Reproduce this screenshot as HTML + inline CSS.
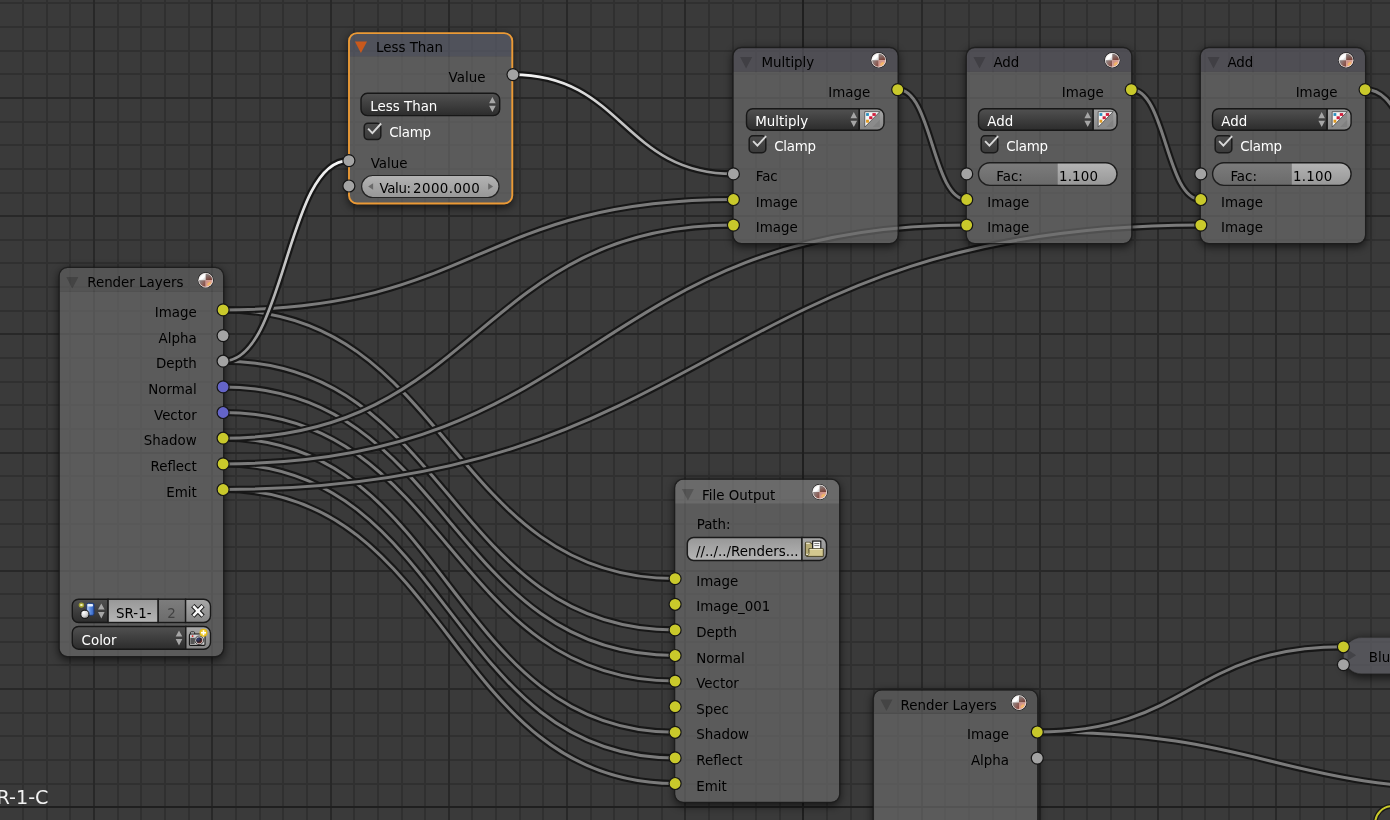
<!DOCTYPE html>
<html lang="en"><head><meta charset="utf-8"><title>Node Editor</title>
<style>html,body{margin:0;padding:0;background:#3a3a3a;}body{width:1390px;height:820px;overflow:hidden;position:relative}svg{display:block;position:absolute;left:0;top:0}text{font-family:"DejaVu Sans","Liberation Sans",sans-serif;}</style>
</head><body>
<svg width="1390" height="820" viewBox="0 0 1390 820">
<defs>
<filter id="noop" x="0" y="0" width="1" height="1" filterUnits="objectBoundingBox"><feOffset dx="0" dy="0"/></filter>
<filter id="sh" x="-20%" y="-20%" width="140%" height="140%"><feGaussianBlur stdDeviation="4.5"/></filter>
<linearGradient id="ddg" x1="0" y1="0" x2="0" y2="1"><stop offset="0" stop-color="#515151"/><stop offset="1" stop-color="#2c2c2c"/></linearGradient>
<linearGradient id="btng" x1="0" y1="0" x2="0" y2="1"><stop offset="0" stop-color="#a9a9a9"/><stop offset="1" stop-color="#858585"/></linearGradient>
<linearGradient id="cbg" x1="0" y1="0" x2="0" y2="1"><stop offset="0" stop-color="#4c4c4c"/><stop offset="1" stop-color="#3a3a3a"/></linearGradient>
<linearGradient id="numg" x1="0" y1="0" x2="0" y2="1"><stop offset="0" stop-color="#b4b4b4"/><stop offset="1" stop-color="#979797"/></linearGradient>
<linearGradient id="sldg" x1="0" y1="0" x2="0" y2="1"><stop offset="0" stop-color="#7c7c7c"/><stop offset="1" stop-color="#6a6a6a"/></linearGradient>
<linearGradient id="txtg" x1="0" y1="0" x2="0" y2="1"><stop offset="0" stop-color="#979797"/><stop offset="1" stop-color="#b6b6b6"/></linearGradient>
<linearGradient id="dimg" x1="0" y1="0" x2="0" y2="1"><stop offset="0" stop-color="#7d7d7d"/><stop offset="1" stop-color="#6c6c6c"/></linearGradient>
<radialGradient id="sphg" cx="0.38" cy="0.32" r="0.75"><stop offset="0" stop-color="#ffffff"/><stop offset="0.55" stop-color="#c9c4c2"/><stop offset="1" stop-color="#6d6260"/></radialGradient>
<linearGradient id="sphr" x1="0" y1="0" x2="1" y2="1"><stop offset="0" stop-color="#c98a80"/><stop offset="1" stop-color="#f0b4a4"/></linearGradient>
<linearGradient id="sphtr" x1="0" y1="0" x2="0.3" y2="1"><stop offset="0" stop-color="#8c8c8c"/><stop offset="1" stop-color="#7a453c"/></linearGradient>
<linearGradient id="sphbl" x1="0" y1="0" x2="1" y2="0.6"><stop offset="0" stop-color="#909090"/><stop offset="1" stop-color="#8a4d44"/></linearGradient>
<linearGradient id="sphw" x1="0" y1="0" x2="1" y2="1"><stop offset="0" stop-color="#d8d8d8"/><stop offset="0.5" stop-color="#ffffff"/><stop offset="1" stop-color="#c8c8c8"/></linearGradient>
<linearGradient id="cylg" x1="0" y1="0" x2="1" y2="0"><stop offset="0" stop-color="#cfe0fa"/><stop offset="0.45" stop-color="#5f8fe0"/><stop offset="1" stop-color="#2f5fc0"/></linearGradient>
<radialGradient id="lensg" cx="0.3" cy="0.3" r="0.9"><stop offset="0" stop-color="#33407a"/><stop offset="0.5" stop-color="#2a2430"/><stop offset="1" stop-color="#a03a28"/></radialGradient>
<radialGradient id="ballg" cx="0.35" cy="0.3" r="0.8"><stop offset="0" stop-color="#ffffff"/><stop offset="0.6" stop-color="#d0d0d0"/><stop offset="1" stop-color="#707070"/></radialGradient>
<linearGradient id="hl1" gradientUnits="userSpaceOnUse" x1="223" y1="361" x2="348" y2="161"><stop offset="0" stop-color="#878787"/><stop offset="0.5" stop-color="#c4c4c4"/><stop offset="1" stop-color="#fafafa"/></linearGradient>
<linearGradient id="hl2" gradientUnits="userSpaceOnUse" x1="513" y1="75" x2="733" y2="174"><stop offset="0" stop-color="#fafafa"/><stop offset="0.5" stop-color="#c4c4c4"/><stop offset="1" stop-color="#8c8c8c"/></linearGradient>
<mask id="shm" maskUnits="userSpaceOnUse" x="0" y="0" width="1390" height="820"><rect width="1390" height="820" fill="#fff"/>
<rect x="349.0" y="33.1" width="163.3" height="170.4" rx="8" fill="#000"/>
<rect x="733.4" y="48.0" width="164.3" height="195.0" rx="8" fill="#000"/>
<rect x="966.7" y="48.0" width="164.6" height="195.0" rx="8" fill="#000"/>
<rect x="1200.8" y="48.0" width="164.3" height="195.0" rx="8" fill="#000"/>
<rect x="59.6" y="268.0" width="163.5" height="388.2" rx="8" fill="#000"/>
<rect x="675.1" y="479.8" width="164.1" height="322.1" rx="8" fill="#000"/>
<rect x="873.7" y="690.4" width="163.6" height="169.6" rx="8" fill="#000"/>
<rect x="1343.6" y="637.6" width="116.4" height="36.2" rx="18" fill="#000"/>
</mask>
</defs>
<rect width="1390" height="820" fill="#3a3a3a"/>
<g shape-rendering="crispEdges"><rect x="22" y="0" width="2" height="820" fill="#303030"/>
<rect x="46" y="0" width="2" height="820" fill="#303030"/>
<rect x="69" y="0" width="2" height="820" fill="#303030"/>
<rect x="117" y="0" width="2" height="820" fill="#303030"/>
<rect x="140" y="0" width="2" height="820" fill="#303030"/>
<rect x="164" y="0" width="2" height="820" fill="#303030"/>
<rect x="188" y="0" width="2" height="820" fill="#303030"/>
<rect x="235" y="0" width="2" height="820" fill="#303030"/>
<rect x="259" y="0" width="2" height="820" fill="#303030"/>
<rect x="282" y="0" width="2" height="820" fill="#303030"/>
<rect x="306" y="0" width="2" height="820" fill="#303030"/>
<rect x="353" y="0" width="2" height="820" fill="#303030"/>
<rect x="377" y="0" width="2" height="820" fill="#303030"/>
<rect x="401" y="0" width="2" height="820" fill="#303030"/>
<rect x="424" y="0" width="2" height="820" fill="#303030"/>
<rect x="471" y="0" width="2" height="820" fill="#303030"/>
<rect x="495" y="0" width="2" height="820" fill="#303030"/>
<rect x="519" y="0" width="2" height="820" fill="#303030"/>
<rect x="542" y="0" width="2" height="820" fill="#303030"/>
<rect x="590" y="0" width="2" height="820" fill="#303030"/>
<rect x="613" y="0" width="2" height="820" fill="#303030"/>
<rect x="637" y="0" width="2" height="820" fill="#303030"/>
<rect x="661" y="0" width="2" height="820" fill="#303030"/>
<rect x="708" y="0" width="2" height="820" fill="#303030"/>
<rect x="732" y="0" width="2" height="820" fill="#303030"/>
<rect x="755" y="0" width="2" height="820" fill="#303030"/>
<rect x="779" y="0" width="2" height="820" fill="#303030"/>
<rect x="826" y="0" width="2" height="820" fill="#303030"/>
<rect x="850" y="0" width="2" height="820" fill="#303030"/>
<rect x="873" y="0" width="2" height="820" fill="#303030"/>
<rect x="897" y="0" width="2" height="820" fill="#303030"/>
<rect x="944" y="0" width="2" height="820" fill="#303030"/>
<rect x="968" y="0" width="2" height="820" fill="#303030"/>
<rect x="992" y="0" width="2" height="820" fill="#303030"/>
<rect x="1015" y="0" width="2" height="820" fill="#303030"/>
<rect x="1063" y="0" width="2" height="820" fill="#303030"/>
<rect x="1086" y="0" width="2" height="820" fill="#303030"/>
<rect x="1110" y="0" width="2" height="820" fill="#303030"/>
<rect x="1134" y="0" width="2" height="820" fill="#303030"/>
<rect x="1181" y="0" width="2" height="820" fill="#303030"/>
<rect x="1204" y="0" width="2" height="820" fill="#303030"/>
<rect x="1228" y="0" width="2" height="820" fill="#303030"/>
<rect x="1252" y="0" width="2" height="820" fill="#303030"/>
<rect x="1299" y="0" width="2" height="820" fill="#303030"/>
<rect x="1323" y="0" width="2" height="820" fill="#303030"/>
<rect x="1346" y="0" width="2" height="820" fill="#303030"/>
<rect x="1370" y="0" width="2" height="820" fill="#303030"/>
<rect x="0" y="2" width="1390" height="2" fill="#303030"/>
<rect x="0" y="26" width="1390" height="2" fill="#303030"/>
<rect x="0" y="50" width="1390" height="2" fill="#303030"/>
<rect x="0" y="73" width="1390" height="2" fill="#303030"/>
<rect x="0" y="121" width="1390" height="2" fill="#303030"/>
<rect x="0" y="144" width="1390" height="2" fill="#303030"/>
<rect x="0" y="168" width="1390" height="2" fill="#303030"/>
<rect x="0" y="192" width="1390" height="2" fill="#303030"/>
<rect x="0" y="239" width="1390" height="2" fill="#303030"/>
<rect x="0" y="262" width="1390" height="2" fill="#303030"/>
<rect x="0" y="286" width="1390" height="2" fill="#303030"/>
<rect x="0" y="310" width="1390" height="2" fill="#303030"/>
<rect x="0" y="357" width="1390" height="2" fill="#303030"/>
<rect x="0" y="381" width="1390" height="2" fill="#303030"/>
<rect x="0" y="404" width="1390" height="2" fill="#303030"/>
<rect x="0" y="428" width="1390" height="2" fill="#303030"/>
<rect x="0" y="475" width="1390" height="2" fill="#303030"/>
<rect x="0" y="499" width="1390" height="2" fill="#303030"/>
<rect x="0" y="523" width="1390" height="2" fill="#303030"/>
<rect x="0" y="546" width="1390" height="2" fill="#303030"/>
<rect x="0" y="593" width="1390" height="2" fill="#303030"/>
<rect x="0" y="617" width="1390" height="2" fill="#303030"/>
<rect x="0" y="641" width="1390" height="2" fill="#303030"/>
<rect x="0" y="664" width="1390" height="2" fill="#303030"/>
<rect x="0" y="712" width="1390" height="2" fill="#303030"/>
<rect x="0" y="735" width="1390" height="2" fill="#303030"/>
<rect x="0" y="759" width="1390" height="2" fill="#303030"/>
<rect x="0" y="783" width="1390" height="2" fill="#303030"/>
<rect x="93" y="0" width="2" height="820" fill="#282828"/>
<rect x="211" y="0" width="2" height="820" fill="#282828"/>
<rect x="330" y="0" width="2" height="820" fill="#282828"/>
<rect x="448" y="0" width="2" height="820" fill="#282828"/>
<rect x="566" y="0" width="2" height="820" fill="#282828"/>
<rect x="684" y="0" width="2" height="820" fill="#282828"/>
<rect x="921" y="0" width="2" height="820" fill="#282828"/>
<rect x="1039" y="0" width="2" height="820" fill="#282828"/>
<rect x="1157" y="0" width="2" height="820" fill="#282828"/>
<rect x="1275" y="0" width="2" height="820" fill="#282828"/>
<rect x="0" y="97" width="1390" height="2" fill="#282828"/>
<rect x="0" y="215" width="1390" height="2" fill="#282828"/>
<rect x="0" y="333" width="1390" height="2" fill="#282828"/>
<rect x="0" y="452" width="1390" height="2" fill="#282828"/>
<rect x="0" y="570" width="1390" height="2" fill="#282828"/>
<rect x="0" y="688" width="1390" height="2" fill="#282828"/>
<rect x="802" y="0" width="2" height="820" fill="#1f1f1f"/>
<rect x="0" y="806" width="1390" height="2" fill="#1f1f1f"/></g>
<g filter="url(#noop)"><text x="-15.7" y="803.7" fill="#f2f2f2" font-size="19.2" text-anchor="start" >SR-1-C</text></g>
<rect x="1375.2" y="806.2" width="80" height="60" rx="17" fill="none" stroke="#181818" stroke-width="4.6"/><rect x="1375.2" y="806.2" width="80" height="60" rx="17" fill="none" stroke="#c9c92b" stroke-width="2"/>
<g id="links">
<path d="M223.2 309.9 C449.1 309.9 449.1 578.6 675.1 578.6" fill="none" stroke="#171717" stroke-width="7.2"/><path d="M223.2 309.9 C449.1 309.9 449.1 578.6 675.1 578.6" fill="none" stroke="#7b7b7b" stroke-width="3.0"/>
<path d="M223.2 361.2 C449.1 361.2 449.1 629.9 675.1 629.9" fill="none" stroke="#171717" stroke-width="7.2"/><path d="M223.2 361.2 C449.1 361.2 449.1 629.9 675.1 629.9" fill="none" stroke="#7b7b7b" stroke-width="3.0"/>
<path d="M223.2 386.9 C449.1 386.9 449.1 655.5 675.1 655.5" fill="none" stroke="#171717" stroke-width="7.2"/><path d="M223.2 386.9 C449.1 386.9 449.1 655.5 675.1 655.5" fill="none" stroke="#7b7b7b" stroke-width="3.0"/>
<path d="M223.2 412.5 C449.1 412.5 449.1 681.1 675.1 681.1" fill="none" stroke="#171717" stroke-width="7.2"/><path d="M223.2 412.5 C449.1 412.5 449.1 681.1 675.1 681.1" fill="none" stroke="#7b7b7b" stroke-width="3.0"/>
<path d="M223.2 438.2 C449.1 438.2 449.1 732.3 675.1 732.3" fill="none" stroke="#171717" stroke-width="7.2"/><path d="M223.2 438.2 C449.1 438.2 449.1 732.3 675.1 732.3" fill="none" stroke="#7b7b7b" stroke-width="3.0"/>
<path d="M223.2 463.9 C449.1 463.9 449.1 757.9 675.1 757.9" fill="none" stroke="#171717" stroke-width="7.2"/><path d="M223.2 463.9 C449.1 463.9 449.1 757.9 675.1 757.9" fill="none" stroke="#7b7b7b" stroke-width="3.0"/>
<path d="M223.2 489.5 C449.1 489.5 449.1 783.5 675.1 783.5" fill="none" stroke="#171717" stroke-width="7.2"/><path d="M223.2 489.5 C449.1 489.5 449.1 783.5 675.1 783.5" fill="none" stroke="#7b7b7b" stroke-width="3.0"/>
<path d="M223.2 309.9 C478.3 309.9 478.3 199.5 733.4 199.5" fill="none" stroke="#171717" stroke-width="7.2"/><path d="M223.2 309.9 C478.3 309.9 478.3 199.5 733.4 199.5" fill="none" stroke="#7b7b7b" stroke-width="3.0"/>
<path d="M223.2 438.2 C478.3 438.2 478.3 225.1 733.4 225.1" fill="none" stroke="#171717" stroke-width="7.2"/><path d="M223.2 438.2 C478.3 438.2 478.3 225.1 733.4 225.1" fill="none" stroke="#7b7b7b" stroke-width="3.0"/>
<path d="M223.2 463.9 C595.0 463.9 595.0 225.1 966.7 225.1" fill="none" stroke="#171717" stroke-width="7.2"/><path d="M223.2 463.9 C595.0 463.9 595.0 225.1 966.7 225.1" fill="none" stroke="#7b7b7b" stroke-width="3.0"/>
<path d="M223.2 489.5 C712.0 489.5 712.0 225.1 1200.8 225.1" fill="none" stroke="#171717" stroke-width="7.2"/><path d="M223.2 489.5 C712.0 489.5 712.0 225.1 1200.8 225.1" fill="none" stroke="#7b7b7b" stroke-width="3.0"/>
<path d="M897.7 89.6 C932.2 89.6 932.2 199.5 966.7 199.5" fill="none" stroke="#171717" stroke-width="7.2"/><path d="M897.7 89.6 C932.2 89.6 932.2 199.5 966.7 199.5" fill="none" stroke="#7b7b7b" stroke-width="3.0"/>
<path d="M1131.0 89.6 C1165.9 89.6 1165.9 199.5 1200.8 199.5" fill="none" stroke="#171717" stroke-width="7.2"/><path d="M1131.0 89.6 C1165.9 89.6 1165.9 199.5 1200.8 199.5" fill="none" stroke="#7b7b7b" stroke-width="3.0"/>
<path d="M1365.1 89.6 C1400.0 89.6 1400.0 147.5 1435.0 147.5" fill="none" stroke="#171717" stroke-width="7.2"/><path d="M1365.1 89.6 C1400.0 89.6 1400.0 147.5 1435.0 147.5" fill="none" stroke="#7b7b7b" stroke-width="3.0"/>
<path d="M1037.3 732.0 C1270.2 732.0 1270.2 790.0 1503.0 790.0" fill="none" stroke="#171717" stroke-width="7.2"/><path d="M1037.3 732.0 C1270.2 732.0 1270.2 790.0 1503.0 790.0" fill="none" stroke="#7b7b7b" stroke-width="3.0"/>
<path d="M1037.3 732.0 C1190.3 732.0 1190.3 646.8 1343.4 646.8" fill="none" stroke="#171717" stroke-width="7.2"/><path d="M1037.3 732.0 C1190.3 732.0 1190.3 646.8 1343.4 646.8" fill="none" stroke="#7b7b7b" stroke-width="3.0"/>
<path d="M223.2 361.2 C285.8 361.2 285.8 160.6 348.4 160.6" fill="none" stroke="#171717" stroke-width="7.2"/><path d="M223.2 361.2 C285.8 361.2 285.8 160.6 348.4 160.6" fill="none" stroke="url(#hl1)" stroke-width="2.7"/>
<path d="M513.1 74.6 C623.2 74.6 623.2 173.9 733.4 173.9" fill="none" stroke="#171717" stroke-width="7.2"/><path d="M513.1 74.6 C623.2 74.6 623.2 173.9 733.4 173.9" fill="none" stroke="url(#hl2)" stroke-width="2.7"/>
</g>
<g mask="url(#shm)">
<rect x="348.0" y="34.1" width="165.3" height="173.4" rx="9" fill="#000" opacity="0.62" filter="url(#sh)"/>
<rect x="732.4" y="49.0" width="166.3" height="198.0" rx="9" fill="#000" opacity="0.62" filter="url(#sh)"/>
<rect x="965.7" y="49.0" width="166.6" height="198.0" rx="9" fill="#000" opacity="0.62" filter="url(#sh)"/>
<rect x="1199.8" y="49.0" width="166.3" height="198.0" rx="9" fill="#000" opacity="0.62" filter="url(#sh)"/>
<rect x="58.6" y="269.0" width="165.5" height="391.2" rx="9" fill="#000" opacity="0.62" filter="url(#sh)"/>
<rect x="674.1" y="480.8" width="166.1" height="325.1" rx="9" fill="#000" opacity="0.62" filter="url(#sh)"/>
<rect x="872.7" y="691.4" width="165.6" height="172.6" rx="9" fill="#000" opacity="0.62" filter="url(#sh)"/>
<rect x="1342.6" y="638.6" width="118.4" height="39.2" rx="19" fill="#000" opacity="0.62" filter="url(#sh)"/>
</g>
<g><path d="M349.0 56.3 H512.3 V195.5 A8 8 0 0 1 504.3 203.5 H357.0 A8 8 0 0 1 349.0 195.5 Z" fill="rgba(108,108,108,0.68)"/><path d="M349.0 56.3 V41.1 A8 8 0 0 1 357.0 33.1 H504.3 A8 8 0 0 1 512.3 41.1 V56.3 Z" fill="rgba(92,95,110,0.66)"/><rect x="349.0" y="33.1" width="163.3" height="170.4" rx="8" fill="none" stroke="#eb9a36" stroke-width="1.9"/><path d="M354.9 41.4 H367.0 L360.9 52.9 Z" fill="#c9591c"/><text x="376.0" y="52.0" fill="#000" font-size="13.4" text-anchor="start" >Less Than</text><text x="485.4" y="81.8" fill="#000" font-size="13.4" text-anchor="end" >Value</text><rect x="361.0" y="93.3" width="138.7" height="22.3" rx="6.3" fill="url(#ddg)" stroke="#171717" stroke-width="1.4"/><text x="370.3" y="111.0" fill="#fff" font-size="13.4" text-anchor="start" >Less Than</text><path d="M489.1 103.2 H495.7 L492.4 96.9 Z M489.1 105.7 H495.7 L492.4 112.0 Z" fill="#a6a6a6"/><rect x="364.2" y="123.2" width="16.6" height="16.4" rx="3.8" fill="url(#cbg)" stroke="#1a1a1a" stroke-width="1.5"/><path d="M368.1 128.6 L372.4 133.1 L381.1 123.5" fill="none" stroke="#d8d8d8" stroke-width="1.9" stroke-linejoin="miter"/><text x="389.2" y="137.2" fill="#fff" font-size="13.4" text-anchor="start" letter-spacing="-0.25">Clamp</text><text x="370.7" y="167.5" fill="#000" font-size="13.4" text-anchor="start" >Value</text><rect x="361.6" y="175.5" width="137.4" height="22.0" rx="11.0" fill="url(#numg)" stroke="#242424" stroke-width="1.2"/><path d="M373.1 183.3 V189.7 L368.2 186.5 Z" fill="#6a6a6a"/><path d="M488.2 183.3 V189.7 L493.1 186.5 Z" fill="#6a6a6a"/><text x="379.4" y="192.7" fill="#000" font-size="13.4" text-anchor="start" letter-spacing="-0.35">Valu:</text><text x="413.0" y="192.7" fill="#000" font-size="13.4" text-anchor="start" letter-spacing="0.42">2000.000</text></g>
<g><path d="M733.4 71.7 H897.7 V235.0 A8 8 0 0 1 889.7 243.0 H741.4 A8 8 0 0 1 733.4 235.0 Z" fill="rgba(108,108,108,0.68)"/><path d="M733.4 71.7 V56.0 A8 8 0 0 1 741.4 48.0 H889.7 A8 8 0 0 1 897.7 56.0 V71.7 Z" fill="rgba(91,90,98,0.66)"/><rect x="732.9" y="47.5" width="165.4" height="196.1" rx="8.5" fill="none" stroke="#1c1c1c" stroke-opacity="0.85" stroke-width="1.3"/><path d="M740.1 57.1 H752.2 L746.1 68.6 Z" fill="rgba(0,0,0,0.2)"/><text x="761.4" y="66.9" fill="#000" font-size="13.4" text-anchor="start" >Multiply</text><g transform="translate(878.7 60.2)"><circle r="7.8999999999999995" fill="#161616"/><circle r="7.3" fill="#e9e4e2"/><path d="M0 0 H-6.8 A6.8 6.8 0 0 1 0 -6.8 Z" fill="url(#sphw)"/><path d="M0 0 V-6.8 A6.8 6.8 0 0 1 6.8 0 Z" fill="url(#sphtr)"/><path d="M0 0 V6.8 A6.8 6.8 0 0 1 -6.8 0 Z" fill="url(#sphbl)"/><path d="M0 0 H6.8 A6.8 6.8 0 0 1 0 6.8 Z" fill="url(#sphr)"/><ellipse cx="3.4" cy="3.6" rx="2.2" ry="1.3" transform="rotate(-40 3.4 3.6)" fill="#f4b860" opacity="0.9"/><ellipse cx="-3" cy="-3" rx="2.6" ry="1.5" transform="rotate(-40 -3 -3)" fill="#fff" opacity="0.9"/><circle r="6.8999999999999995" fill="none" stroke="#f4ecea" stroke-width="0.8" opacity="0.55"/></g><text x="870.2" y="96.9" fill="#000" font-size="13.4" text-anchor="end" >Image</text><path d="M752.8 108.7 H859.3 V130.3 H752.8 A6.3 6.3 0 0 1 746.5 124.0 V115.0 A6.3 6.3 0 0 1 752.8 108.7 Z" fill="url(#ddg)" stroke="#171717" stroke-width="1.4"/><text x="755.3" y="125.9" fill="#fff" font-size="13.4" text-anchor="start" >Multiply</text><path d="M850.5 118.3 H857.1 L853.8 112.0 Z M850.5 120.8 H857.1 L853.8 127.1 Z" fill="#a6a6a6"/><path d="M859.3 108.7 H877.2 A6.8 6.8 0 0 1 884.0 115.5 V123.5 A6.8 6.8 0 0 1 877.2 130.3 H859.3 Z" fill="url(#btng)" stroke="#191919" stroke-width="1.4"/><g transform="translate(864.8 111.7)"><rect x="0" y="0" width="15" height="15.4" fill="#8b8b8b"/><path d="M8 15.4 H15 V8 Z" fill="#818181"/><path d="M0 0 H15 L0 15.4 Z" fill="#f6f6f6" stroke="#3a3a3a" stroke-width="0.7"/><rect x="1.3" y="1.4" width="2.8" height="2.8" fill="#2a8fc0"/><rect x="7.6" y="1.4" width="3.4" height="2.8" fill="#cf1f3c"/><rect x="4.4" y="4.6" width="3.2" height="2.9" fill="#cf1f3c"/><rect x="1.3" y="8" width="2.8" height="3" fill="#e09a20"/></g><rect x="749.2" y="135.8" width="16.6" height="16.9" rx="3.8" fill="url(#cbg)" stroke="#1a1a1a" stroke-width="1.5"/><path d="M753.1 141.2 L757.4 145.7 L766.1 136.1" fill="none" stroke="#d8d8d8" stroke-width="1.9" stroke-linejoin="miter"/><text x="774.2" y="150.9" fill="#fff" font-size="13.4" text-anchor="start" letter-spacing="-0.25">Clamp</text><text x="755.7" y="180.6" fill="#000" font-size="13.4" text-anchor="start" >Fac</text><text x="755.7" y="206.8" fill="#000" font-size="13.4" text-anchor="start" >Image</text><text x="755.7" y="232.0" fill="#000" font-size="13.4" text-anchor="start" >Image</text></g>
<g><path d="M966.7 71.7 H1131.3 V235.0 A8 8 0 0 1 1123.3 243.0 H974.7 A8 8 0 0 1 966.7 235.0 Z" fill="rgba(108,108,108,0.68)"/><path d="M966.7 71.7 V56.0 A8 8 0 0 1 974.7 48.0 H1123.3 A8 8 0 0 1 1131.3 56.0 V71.7 Z" fill="rgba(91,90,98,0.66)"/><rect x="966.2" y="47.5" width="165.7" height="196.1" rx="8.5" fill="none" stroke="#1c1c1c" stroke-opacity="0.85" stroke-width="1.3"/><path d="M973.4 57.1 H985.5 L979.5 68.6 Z" fill="rgba(0,0,0,0.2)"/><text x="993.4" y="66.9" fill="#000" font-size="13.4" text-anchor="start" >Add</text><g transform="translate(1112.3 60.2)"><circle r="7.8999999999999995" fill="#161616"/><circle r="7.3" fill="#e9e4e2"/><path d="M0 0 H-6.8 A6.8 6.8 0 0 1 0 -6.8 Z" fill="url(#sphw)"/><path d="M0 0 V-6.8 A6.8 6.8 0 0 1 6.8 0 Z" fill="url(#sphtr)"/><path d="M0 0 V6.8 A6.8 6.8 0 0 1 -6.8 0 Z" fill="url(#sphbl)"/><path d="M0 0 H6.8 A6.8 6.8 0 0 1 0 6.8 Z" fill="url(#sphr)"/><ellipse cx="3.4" cy="3.6" rx="2.2" ry="1.3" transform="rotate(-40 3.4 3.6)" fill="#f4b860" opacity="0.9"/><ellipse cx="-3" cy="-3" rx="2.6" ry="1.5" transform="rotate(-40 -3 -3)" fill="#fff" opacity="0.9"/><circle r="6.8999999999999995" fill="none" stroke="#f4ecea" stroke-width="0.8" opacity="0.55"/></g><text x="1103.8" y="96.9" fill="#000" font-size="13.4" text-anchor="end" >Image</text><path d="M984.8 108.7 H1093.2 V130.3 H984.8 A6.3 6.3 0 0 1 978.5 124.0 V115.0 A6.3 6.3 0 0 1 984.8 108.7 Z" fill="url(#ddg)" stroke="#171717" stroke-width="1.4"/><text x="987.3" y="125.9" fill="#fff" font-size="13.4" text-anchor="start" >Add</text><path d="M1084.4 118.3 H1091.0 L1087.7 112.0 Z M1084.4 120.8 H1091.0 L1087.7 127.1 Z" fill="#a6a6a6"/><path d="M1093.2 108.7 H1110.3 A6.8 6.8 0 0 1 1117.1 115.5 V123.5 A6.8 6.8 0 0 1 1110.3 130.3 H1093.2 Z" fill="url(#btng)" stroke="#191919" stroke-width="1.4"/><g transform="translate(1098.2 111.7)"><rect x="0" y="0" width="15" height="15.4" fill="#8b8b8b"/><path d="M8 15.4 H15 V8 Z" fill="#818181"/><path d="M0 0 H15 L0 15.4 Z" fill="#f6f6f6" stroke="#3a3a3a" stroke-width="0.7"/><rect x="1.3" y="1.4" width="2.8" height="2.8" fill="#2a8fc0"/><rect x="7.6" y="1.4" width="3.4" height="2.8" fill="#cf1f3c"/><rect x="4.4" y="4.6" width="3.2" height="2.9" fill="#cf1f3c"/><rect x="1.3" y="8" width="2.8" height="3" fill="#e09a20"/></g><rect x="981.2" y="135.8" width="16.6" height="16.9" rx="3.8" fill="url(#cbg)" stroke="#1a1a1a" stroke-width="1.5"/><path d="M985.1 141.2 L989.4 145.7 L998.1 136.1" fill="none" stroke="#d8d8d8" stroke-width="1.9" stroke-linejoin="miter"/><text x="1006.2" y="150.9" fill="#fff" font-size="13.4" text-anchor="start" letter-spacing="-0.25">Clamp</text><clipPath id="cl978"><rect x="978.5" y="162.8" width="138.5" height="22.6" rx="11.3"/></clipPath><g clip-path="url(#cl978)"><rect x="978.5" y="162.8" width="138.5" height="22.6" fill="url(#numg)"/><rect x="978.5" y="162.8" width="79.2" height="22.6" fill="url(#sldg)"/></g><rect x="978.5" y="162.8" width="138.5" height="22.6" rx="11.3" fill="none" stroke="#1e1e1e" stroke-width="1.4"/><text x="996.3" y="180.6" fill="#000" font-size="13.4" text-anchor="start" >Fac:</text><text x="1058.9" y="180.6" fill="#000" font-size="13.4" text-anchor="start" letter-spacing="0.22">1.100</text><text x="987.2" y="206.8" fill="#000" font-size="13.4" text-anchor="start" >Image</text><text x="987.2" y="232.0" fill="#000" font-size="13.4" text-anchor="start" >Image</text></g>
<g><path d="M1200.8 71.7 H1365.1 V235.0 A8 8 0 0 1 1357.1 243.0 H1208.8 A8 8 0 0 1 1200.8 235.0 Z" fill="rgba(108,108,108,0.68)"/><path d="M1200.8 71.7 V56.0 A8 8 0 0 1 1208.8 48.0 H1357.1 A8 8 0 0 1 1365.1 56.0 V71.7 Z" fill="rgba(91,90,98,0.66)"/><rect x="1200.2" y="47.5" width="165.4" height="196.1" rx="8.5" fill="none" stroke="#1c1c1c" stroke-opacity="0.85" stroke-width="1.3"/><path d="M1207.5 57.1 H1219.6 L1213.5 68.6 Z" fill="rgba(0,0,0,0.2)"/><text x="1227.4" y="66.9" fill="#000" font-size="13.4" text-anchor="start" >Add</text><g transform="translate(1346.1 60.2)"><circle r="7.8999999999999995" fill="#161616"/><circle r="7.3" fill="#e9e4e2"/><path d="M0 0 H-6.8 A6.8 6.8 0 0 1 0 -6.8 Z" fill="url(#sphw)"/><path d="M0 0 V-6.8 A6.8 6.8 0 0 1 6.8 0 Z" fill="url(#sphtr)"/><path d="M0 0 V6.8 A6.8 6.8 0 0 1 -6.8 0 Z" fill="url(#sphbl)"/><path d="M0 0 H6.8 A6.8 6.8 0 0 1 0 6.8 Z" fill="url(#sphr)"/><ellipse cx="3.4" cy="3.6" rx="2.2" ry="1.3" transform="rotate(-40 3.4 3.6)" fill="#f4b860" opacity="0.9"/><ellipse cx="-3" cy="-3" rx="2.6" ry="1.5" transform="rotate(-40 -3 -3)" fill="#fff" opacity="0.9"/><circle r="6.8999999999999995" fill="none" stroke="#f4ecea" stroke-width="0.8" opacity="0.55"/></g><text x="1337.6" y="96.9" fill="#000" font-size="13.4" text-anchor="end" >Image</text><path d="M1218.8 108.7 H1327.2 V130.3 H1218.8 A6.3 6.3 0 0 1 1212.5 124.0 V115.0 A6.3 6.3 0 0 1 1218.8 108.7 Z" fill="url(#ddg)" stroke="#171717" stroke-width="1.4"/><text x="1221.3" y="125.9" fill="#fff" font-size="13.4" text-anchor="start" >Add</text><path d="M1318.4 118.3 H1325.0 L1321.7 112.0 Z M1318.4 120.8 H1325.0 L1321.7 127.1 Z" fill="#a6a6a6"/><path d="M1327.2 108.7 H1344.3 A6.8 6.8 0 0 1 1351.1 115.5 V123.5 A6.8 6.8 0 0 1 1344.3 130.3 H1327.2 Z" fill="url(#btng)" stroke="#191919" stroke-width="1.4"/><g transform="translate(1332.2 111.7)"><rect x="0" y="0" width="15" height="15.4" fill="#8b8b8b"/><path d="M8 15.4 H15 V8 Z" fill="#818181"/><path d="M0 0 H15 L0 15.4 Z" fill="#f6f6f6" stroke="#3a3a3a" stroke-width="0.7"/><rect x="1.3" y="1.4" width="2.8" height="2.8" fill="#2a8fc0"/><rect x="7.6" y="1.4" width="3.4" height="2.8" fill="#cf1f3c"/><rect x="4.4" y="4.6" width="3.2" height="2.9" fill="#cf1f3c"/><rect x="1.3" y="8" width="2.8" height="3" fill="#e09a20"/></g><rect x="1215.2" y="135.8" width="16.6" height="16.9" rx="3.8" fill="url(#cbg)" stroke="#1a1a1a" stroke-width="1.5"/><path d="M1219.1 141.2 L1223.4 145.7 L1232.1 136.1" fill="none" stroke="#d8d8d8" stroke-width="1.9" stroke-linejoin="miter"/><text x="1240.2" y="150.9" fill="#fff" font-size="13.4" text-anchor="start" letter-spacing="-0.25">Clamp</text><clipPath id="cl1212"><rect x="1212.6" y="162.8" width="138.5" height="22.6" rx="11.3"/></clipPath><g clip-path="url(#cl1212)"><rect x="1212.6" y="162.8" width="138.5" height="22.6" fill="url(#numg)"/><rect x="1212.6" y="162.8" width="79.2" height="22.6" fill="url(#sldg)"/></g><rect x="1212.6" y="162.8" width="138.5" height="22.6" rx="11.3" fill="none" stroke="#1e1e1e" stroke-width="1.4"/><text x="1230.4" y="180.6" fill="#000" font-size="13.4" text-anchor="start" >Fac:</text><text x="1293.0" y="180.6" fill="#000" font-size="13.4" text-anchor="start" letter-spacing="0.22">1.100</text><text x="1221.1" y="206.8" fill="#000" font-size="13.4" text-anchor="start" >Image</text><text x="1221.1" y="232.0" fill="#000" font-size="13.4" text-anchor="start" >Image</text></g>
<g><path d="M59.6 291.7 H223.1 V648.2 A8 8 0 0 1 215.1 656.2 H67.6 A8 8 0 0 1 59.6 648.2 Z" fill="rgba(108,108,108,0.68)"/><path d="M59.6 291.7 V276.0 A8 8 0 0 1 67.6 268.0 H215.1 A8 8 0 0 1 223.1 276.0 V291.7 Z" fill="rgba(99,99,99,0.66)"/><rect x="59.1" y="267.4" width="164.6" height="389.3" rx="8.5" fill="none" stroke="#1c1c1c" stroke-opacity="0.85" stroke-width="1.3"/><path d="M66.3 277.1 H78.4 L72.3 288.6 Z" fill="rgba(0,0,0,0.2)"/><text x="87.2" y="286.7" fill="#000" font-size="13.4" text-anchor="start" >Render Layers</text><g transform="translate(205.7 280.2)"><circle r="7.8999999999999995" fill="#161616"/><circle r="7.3" fill="#e9e4e2"/><path d="M0 0 H-6.8 A6.8 6.8 0 0 1 0 -6.8 Z" fill="url(#sphw)"/><path d="M0 0 V-6.8 A6.8 6.8 0 0 1 6.8 0 Z" fill="url(#sphtr)"/><path d="M0 0 V6.8 A6.8 6.8 0 0 1 -6.8 0 Z" fill="url(#sphbl)"/><path d="M0 0 H6.8 A6.8 6.8 0 0 1 0 6.8 Z" fill="url(#sphr)"/><ellipse cx="3.4" cy="3.6" rx="2.2" ry="1.3" transform="rotate(-40 3.4 3.6)" fill="#f4b860" opacity="0.9"/><ellipse cx="-3" cy="-3" rx="2.6" ry="1.5" transform="rotate(-40 -3 -3)" fill="#fff" opacity="0.9"/><circle r="6.8999999999999995" fill="none" stroke="#f4ecea" stroke-width="0.8" opacity="0.55"/></g><text x="196.7" y="316.9" fill="#000" font-size="13.4" text-anchor="end" >Image</text><text x="196.7" y="342.6" fill="#000" font-size="13.4" text-anchor="end" >Alpha</text><text x="196.7" y="368.2" fill="#000" font-size="13.4" text-anchor="end" >Depth</text><text x="196.7" y="393.9" fill="#000" font-size="13.4" text-anchor="end" >Normal</text><text x="196.7" y="419.5" fill="#000" font-size="13.4" text-anchor="end" >Vector</text><text x="196.7" y="445.2" fill="#000" font-size="13.4" text-anchor="end" >Shadow</text><text x="196.7" y="470.9" fill="#000" font-size="13.4" text-anchor="end" >Reflect</text><text x="196.7" y="496.5" fill="#000" font-size="13.4" text-anchor="end" >Emit</text><path d="M78.6 599.2 H108.1 V622.5 H78.6 A6.3 6.3 0 0 1 72.3 616.2 V605.5 A6.3 6.3 0 0 1 78.6 599.2 Z" fill="url(#ddg)" stroke="#171717" stroke-width="1.4"/><path d="M98.0 609.6 H104.6 L101.3 603.4 Z M98.0 612.1 H104.6 L101.3 618.5 Z" fill="#a6a6a6"/><rect x="86.7" y="603.2" width="7.3" height="12.1" rx="1.6" fill="url(#cylg)" stroke="#1b3775" stroke-width="1"/><rect x="87.6" y="604" width="5.4" height="2.6" rx="1" fill="#e8f0fc"/><circle cx="84.9" cy="614.3" r="4.1" fill="url(#ballg)" stroke="#0e0e0e" stroke-width="1"/><circle cx="81.4" cy="605.1" r="2.7" fill="#a3a332"/><ellipse cx="81.4" cy="605" rx="1.4" ry="0.9" fill="#f6f6c8"/><rect x="108.1" y="599.2" width="50.1" height="23.3" fill="url(#txtg)" stroke="#191919" stroke-width="1.4"/><text x="116.1" y="618.1" fill="#000" font-size="13.4" text-anchor="start" >SR-1-</text><rect x="158.2" y="599.2" width="27.4" height="23.3" fill="url(#dimg)" stroke="#191919" stroke-width="1.4"/><text x="171.5" y="617.9" fill="#424242" font-size="13.4" text-anchor="middle" >2</text><path d="M185.6 599.2 H203.7 A6.8 6.8 0 0 1 210.5 606.0 V615.7 A6.8 6.8 0 0 1 203.7 622.5 H185.6 Z" fill="url(#btng)" stroke="#191919" stroke-width="1.4"/><path d="M192.8 605.6 L203 616.2 M203 605.6 L192.8 616.2" stroke="#141414" stroke-width="4.6" stroke-linecap="butt"/><path d="M193.2 606 L202.6 615.8 M202.6 606 L193.2 615.8" stroke="#f6f6f6" stroke-width="2.6" stroke-linecap="butt"/><path d="M78.6 626.5 H185.8 V649.2 H78.6 A6.3 6.3 0 0 1 72.3 642.9 V632.8 A6.3 6.3 0 0 1 78.6 626.5 Z" fill="url(#ddg)" stroke="#171717" stroke-width="1.4"/><text x="81.6" y="644.5" fill="#fff" font-size="13.4" text-anchor="start" >Color</text><path d="M175.7 636.6 H182.3 L179.0 630.4 Z M175.7 639.1 H182.3 L179.0 645.5 Z" fill="#a6a6a6"/><path d="M185.8 626.5 H203.7 A6.8 6.8 0 0 1 210.5 633.3 V642.4 A6.8 6.8 0 0 1 203.7 649.2 H185.8 Z" fill="url(#btng)" stroke="#191919" stroke-width="1.4"/><rect x="190.4" y="631.9" width="4.2" height="2.6" rx="0.8" fill="#e4e4e4" stroke="#141414" stroke-width="0.9"/><rect x="189.4" y="634" width="15.6" height="11.4" rx="1.2" fill="#d6d6d6" stroke="#141414" stroke-width="1.1"/><rect x="190.3" y="637.8" width="4.4" height="6.2" fill="#555"/><circle cx="199.2" cy="640.3" r="4.3" fill="#ececec" stroke="#141414" stroke-width="0.8"/><circle cx="199.2" cy="640.3" r="3.1" fill="url(#lensg)"/><circle cx="192.6" cy="636.1" r="0.95" fill="#e02020"/><circle cx="203.5" cy="632.7" r="4" fill="#e2b81c"/><circle cx="203.5" cy="632.7" r="3" fill="#f0cc30"/><path d="M203.5 630.2 V635.2 M201 632.7 H206" stroke="#fff" stroke-width="1.5"/></g>
<g><path d="M675.1 503.8 H839.2 V793.9 A8 8 0 0 1 831.2 801.9 H683.1 A8 8 0 0 1 675.1 793.9 Z" fill="rgba(108,108,108,0.68)"/><path d="M675.1 503.8 V487.8 A8 8 0 0 1 683.1 479.8 H831.2 A8 8 0 0 1 839.2 487.8 V503.8 Z" fill="rgba(132,132,132,0.66)"/><rect x="674.6" y="479.2" width="165.2" height="323.2" rx="8.5" fill="none" stroke="#1c1c1c" stroke-opacity="0.85" stroke-width="1.3"/><path d="M681.8 488.9 H693.9 L687.9 500.4 Z" fill="rgba(0,0,0,0.2)"/><text x="702.1" y="499.5" fill="#000" font-size="13.4" text-anchor="start" >File Output</text><g transform="translate(819.7 492.0)"><circle r="7.8999999999999995" fill="#161616"/><circle r="7.3" fill="#e9e4e2"/><path d="M0 0 H-6.8 A6.8 6.8 0 0 1 0 -6.8 Z" fill="url(#sphw)"/><path d="M0 0 V-6.8 A6.8 6.8 0 0 1 6.8 0 Z" fill="url(#sphtr)"/><path d="M0 0 V6.8 A6.8 6.8 0 0 1 -6.8 0 Z" fill="url(#sphbl)"/><path d="M0 0 H6.8 A6.8 6.8 0 0 1 0 6.8 Z" fill="url(#sphr)"/><ellipse cx="3.4" cy="3.6" rx="2.2" ry="1.3" transform="rotate(-40 3.4 3.6)" fill="#f4b860" opacity="0.9"/><ellipse cx="-3" cy="-3" rx="2.6" ry="1.5" transform="rotate(-40 -3 -3)" fill="#fff" opacity="0.9"/><circle r="6.8999999999999995" fill="none" stroke="#f4ecea" stroke-width="0.8" opacity="0.55"/></g><text x="696.7" y="528.7" fill="#000" font-size="13.4" text-anchor="start" >Path:</text><path d="M693.5999999999999 537.5 H802 V560.5 H693.5999999999999 A6.3 6.3 0 0 1 687.3 554.2 V543.8 A6.3 6.3 0 0 1 693.5999999999999 537.5 Z" fill="url(#txtg)" stroke="#1b1b1b" stroke-width="1.5"/><text x="696.0" y="556.3" fill="#000" font-size="13.4" text-anchor="start" >//../../Renders...</text><path d="M802.0 537.5 H819.7 A6.8 6.8 0 0 1 826.5 544.3 V553.7 A6.8 6.8 0 0 1 819.7 560.5 H802.0 Z" fill="url(#btng)" stroke="#191919" stroke-width="1.4"/><path d="M805.4 543.1 Q805.4 542.3 806.2 542.3 H810.1 L811.5 543.8 H813.4 V555.4 H805.4 Z" fill="#b7ac76" stroke="#3f391c" stroke-width="0.9"/><path d="M806.2 543.2 H809.8" stroke="#f8f6e6" stroke-width="1.1"/><rect x="812.7" y="541.1" width="8.1" height="8.2" fill="#fafafa" stroke="#0c0c0c" stroke-width="1.1"/><path d="M814.3 543.5 H819.3 M814.3 545.6 H819.3" stroke="#7d7d7d" stroke-width="1"/><path d="M808.9 548.7 H823.3 V556.4 H806.6 C809.6 555.6 808.9 552 808.9 548.7 Z" fill="#d3c88f" stroke="#3f391c" stroke-width="0.9"/><path d="M809.6 549.4 H822.6" stroke="#f4efcf" stroke-width="0.9"/><path d="M806 553.2 C806 556 808.6 556.2 809 552.6 C808.4 554.6 806.8 554.8 806 553.2 Z" fill="#f6f3e2"/><text x="696.2" y="585.8" fill="#000" font-size="13.4" text-anchor="start" >Image</text><text x="696.2" y="611.4" fill="#000" font-size="13.4" text-anchor="start" >Image_001</text><text x="696.2" y="637.0" fill="#000" font-size="13.4" text-anchor="start" >Depth</text><text x="696.2" y="662.6" fill="#000" font-size="13.4" text-anchor="start" >Normal</text><text x="696.2" y="688.2" fill="#000" font-size="13.4" text-anchor="start" >Vector</text><text x="696.2" y="713.8" fill="#000" font-size="13.4" text-anchor="start" >Spec</text><text x="696.2" y="739.4" fill="#000" font-size="13.4" text-anchor="start" >Shadow</text><text x="696.2" y="765.0" fill="#000" font-size="13.4" text-anchor="start" >Reflect</text><text x="696.2" y="790.6" fill="#000" font-size="13.4" text-anchor="start" >Emit</text></g>
<g><path d="M873.7 713.8 H1037.3 V852.0 A8 8 0 0 1 1029.3 860.0 H881.7 A8 8 0 0 1 873.7 852.0 Z" fill="rgba(108,108,108,0.68)"/><path d="M873.7 713.8 V698.4 A8 8 0 0 1 881.7 690.4 H1029.3 A8 8 0 0 1 1037.3 698.4 V713.8 Z" fill="rgba(99,99,99,0.66)"/><rect x="873.2" y="689.9" width="164.7" height="170.7" rx="8.5" fill="none" stroke="#1c1c1c" stroke-opacity="0.85" stroke-width="1.3"/><path d="M880.4 699.5 H892.5 L886.5 711.0 Z" fill="rgba(0,0,0,0.2)"/><text x="900.6" y="710.0" fill="#000" font-size="13.4" text-anchor="start" >Render Layers</text><g transform="translate(1019.0 702.6)"><circle r="7.8999999999999995" fill="#161616"/><circle r="7.3" fill="#e9e4e2"/><path d="M0 0 H-6.8 A6.8 6.8 0 0 1 0 -6.8 Z" fill="url(#sphw)"/><path d="M0 0 V-6.8 A6.8 6.8 0 0 1 6.8 0 Z" fill="url(#sphtr)"/><path d="M0 0 V6.8 A6.8 6.8 0 0 1 -6.8 0 Z" fill="url(#sphbl)"/><path d="M0 0 H6.8 A6.8 6.8 0 0 1 0 6.8 Z" fill="url(#sphr)"/><ellipse cx="3.4" cy="3.6" rx="2.2" ry="1.3" transform="rotate(-40 3.4 3.6)" fill="#f4b860" opacity="0.9"/><ellipse cx="-3" cy="-3" rx="2.6" ry="1.5" transform="rotate(-40 -3 -3)" fill="#fff" opacity="0.9"/><circle r="6.8999999999999995" fill="none" stroke="#f4ecea" stroke-width="0.8" opacity="0.55"/></g><text x="1009.0" y="739.0" fill="#000" font-size="13.4" text-anchor="end" >Image</text><text x="1009.0" y="765.2" fill="#000" font-size="13.4" text-anchor="end" >Alpha</text></g>
<g><rect x="1343.6" y="637.6" width="116.40000000000009" height="36.19999999999993" rx="18" fill="rgba(98,98,104,0.68)" stroke="#2c2c2c" stroke-opacity="0.5"/><path d="M1347.6 649.6 V660.8 L1356.2 655.2 Z" fill="rgba(0,0,0,0.2)"/><text x="1368.8" y="662.3" fill="#000" font-size="13.4" text-anchor="start" >Blur</text></g>
<g id="sockets">
<circle cx="513.0" cy="74.6" r="6.0" fill="#a3a3a3" stroke="#161616" stroke-width="1.2"/>
<circle cx="348.9" cy="160.6" r="6.0" fill="#a3a3a3" stroke="#161616" stroke-width="1.2"/>
<circle cx="348.9" cy="186.0" r="6.0" fill="#a3a3a3" stroke="#161616" stroke-width="1.2"/>
<circle cx="897.7" cy="89.6" r="6.0" fill="#c9c92b" stroke="#161616" stroke-width="1.2"/>
<circle cx="733.4" cy="173.9" r="6.0" fill="#a3a3a3" stroke="#161616" stroke-width="1.2"/>
<circle cx="733.4" cy="199.5" r="6.0" fill="#c9c92b" stroke="#161616" stroke-width="1.2"/>
<circle cx="733.4" cy="225.1" r="6.0" fill="#c9c92b" stroke="#161616" stroke-width="1.2"/>
<circle cx="1131.3" cy="89.6" r="6.0" fill="#c9c92b" stroke="#161616" stroke-width="1.2"/>
<circle cx="966.7" cy="173.9" r="6.0" fill="#a3a3a3" stroke="#161616" stroke-width="1.2"/>
<circle cx="966.7" cy="199.5" r="6.0" fill="#c9c92b" stroke="#161616" stroke-width="1.2"/>
<circle cx="966.7" cy="225.1" r="6.0" fill="#c9c92b" stroke="#161616" stroke-width="1.2"/>
<circle cx="1365.1" cy="89.6" r="6.0" fill="#c9c92b" stroke="#161616" stroke-width="1.2"/>
<circle cx="1200.8" cy="173.9" r="6.0" fill="#a3a3a3" stroke="#161616" stroke-width="1.2"/>
<circle cx="1200.8" cy="199.5" r="6.0" fill="#c9c92b" stroke="#161616" stroke-width="1.2"/>
<circle cx="1200.8" cy="225.1" r="6.0" fill="#c9c92b" stroke="#161616" stroke-width="1.2"/>
<circle cx="223.1" cy="309.9" r="6.0" fill="#c9c92b" stroke="#161616" stroke-width="1.2"/>
<circle cx="223.1" cy="335.6" r="6.0" fill="#a3a3a3" stroke="#161616" stroke-width="1.2"/>
<circle cx="223.1" cy="361.2" r="6.0" fill="#a3a3a3" stroke="#161616" stroke-width="1.2"/>
<circle cx="223.1" cy="386.9" r="6.0" fill="#6464c8" stroke="#161616" stroke-width="1.2"/>
<circle cx="223.1" cy="412.5" r="6.0" fill="#6464c8" stroke="#161616" stroke-width="1.2"/>
<circle cx="223.1" cy="438.2" r="6.0" fill="#c9c92b" stroke="#161616" stroke-width="1.2"/>
<circle cx="223.1" cy="463.9" r="6.0" fill="#c9c92b" stroke="#161616" stroke-width="1.2"/>
<circle cx="223.1" cy="489.5" r="6.0" fill="#c9c92b" stroke="#161616" stroke-width="1.2"/>
<circle cx="675.1" cy="578.6" r="6.0" fill="#c9c92b" stroke="#161616" stroke-width="1.2"/>
<circle cx="675.1" cy="604.3" r="6.0" fill="#c9c92b" stroke="#161616" stroke-width="1.2"/>
<circle cx="675.1" cy="629.9" r="6.0" fill="#c9c92b" stroke="#161616" stroke-width="1.2"/>
<circle cx="675.1" cy="655.5" r="6.0" fill="#c9c92b" stroke="#161616" stroke-width="1.2"/>
<circle cx="675.1" cy="681.1" r="6.0" fill="#c9c92b" stroke="#161616" stroke-width="1.2"/>
<circle cx="675.1" cy="706.7" r="6.0" fill="#c9c92b" stroke="#161616" stroke-width="1.2"/>
<circle cx="675.1" cy="732.3" r="6.0" fill="#c9c92b" stroke="#161616" stroke-width="1.2"/>
<circle cx="675.1" cy="757.9" r="6.0" fill="#c9c92b" stroke="#161616" stroke-width="1.2"/>
<circle cx="675.1" cy="783.5" r="6.0" fill="#c9c92b" stroke="#161616" stroke-width="1.2"/>
<circle cx="1037.3" cy="732.0" r="6.0" fill="#c9c92b" stroke="#161616" stroke-width="1.2"/>
<circle cx="1037.3" cy="758.1" r="6.0" fill="#a3a3a3" stroke="#161616" stroke-width="1.2"/>
<circle cx="1343.4" cy="646.8" r="6.0" fill="#c9c92b" stroke="#161616" stroke-width="1.2"/>
<circle cx="1343.4" cy="664.6" r="6.0" fill="#a3a3a3" stroke="#161616" stroke-width="1.2"/>
</g>
</svg>
</body></html>
